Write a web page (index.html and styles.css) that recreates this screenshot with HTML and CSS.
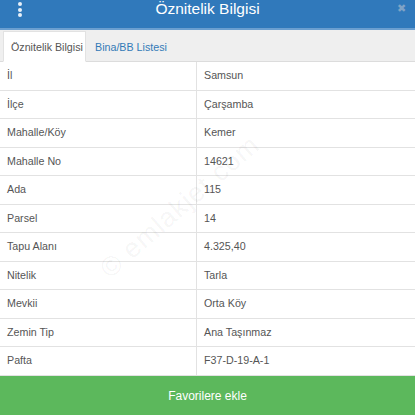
FILE: index.html
```html
<!DOCTYPE html>
<html lang="tr">
<head>
<meta charset="utf-8">
<title>Öznitelik Bilgisi</title>
<link rel="stylesheet" href="styles.css">
</head>
<body>
<div class="panel">
  <header class="topbar">
    <span class="menu-dots"><i></i><i></i><i></i></span>
    <h1 class="title">Öznitelik Bilgisi</h1>
    <span class="close">&#x2716;</span>
  </header>
  <nav class="tabs">
    <span class="tab active">Öznitelik Bilgisi</span>
    <span class="tab">Bina/BB Listesi</span>
  </nav>
  <div class="table">
    <div class="row"><div class="cell key">İl</div><div class="cell val">Samsun</div></div>
    <div class="row"><div class="cell key">İlçe</div><div class="cell val">Çarşamba</div></div>
    <div class="row"><div class="cell key">Mahalle/Köy</div><div class="cell val">Kemer</div></div>
    <div class="row"><div class="cell key">Mahalle No</div><div class="cell val">14621</div></div>
    <div class="row"><div class="cell key">Ada</div><div class="cell val">115</div></div>
    <div class="row"><div class="cell key">Parsel</div><div class="cell val">14</div></div>
    <div class="row"><div class="cell key">Tapu Alanı</div><div class="cell val">4.325,40</div></div>
    <div class="row"><div class="cell key">Nitelik</div><div class="cell val">Tarla</div></div>
    <div class="row"><div class="cell key">Mevkii</div><div class="cell val">Orta Köy</div></div>
    <div class="row"><div class="cell key">Zemin Tip</div><div class="cell val">Ana Taşınmaz</div></div>
    <div class="row"><div class="cell key">Pafta</div><div class="cell val">F37-D-19-A-1</div></div>
    <div class="watermark">© emlakjet.com</div>
  </div>
  <button class="fav">Favorilere ekle</button>
</div>
</body>
</html>
```
FILE: styles.css
```css
html, body {
  margin: 0;
  padding: 0;
  background: #fff;
}
body {
  font-family: "Liberation Sans", Arial, sans-serif;
  width: 415px;
  height: 415px;
  overflow: hidden;
}
.panel {
  display: flex;
  flex-direction: column;
  height: 415px;
}
.topbar {
  height: 28px;
  background: #3079bb;
  border-bottom: 2px solid #6b9fd0;
  display: flex;
  align-items: center;
  justify-content: center;
  position: relative;
  flex: none;
}
.title {
  margin: 0;
  font-size: 15.5px;
  font-weight: normal;
  color: #fff;
  line-height: 18px;
  margin-top: -11px;
}
.menu-dots {
  position: absolute;
  left: 18px;
  top: 2px;
  display: flex;
  flex-direction: column;
  gap: 1.5px;
}
.menu-dots i {
  display: block;
  width: 4px;
  height: 4px;
  border-radius: 50%;
  background: #e8f0f8;
}
.close {
  position: absolute;
  right: 9px;
  top: 2px;
  font-size: 11px;
  color: #7fa3c6;
  line-height: 12px;
}
.tabs {
  height: 31px;
  background: #efefef;
  border-bottom: 1px solid #dcdcdc;
  display: flex;
  align-items: flex-end;
  padding-left: 3px;
  flex: none;
}
.tab {
  height: 30px;
  line-height: 30px;
  font-size: 10.7px;
  color: #337ab7;
  padding: 0 8px 0 9px;
  box-sizing: border-box;
  margin-bottom: -1px;
  white-space: nowrap;
}
.tab.active {
  background: #fff;
  color: #555;
  width: 83px;
  padding: 0 0 0 7px;
  height: 31px;
  line-height: 30px;
  border: 1px solid #e2e2e2;
  border-bottom-color: #fff;
}
.table {
  flex: 1;
  position: relative;
  overflow: hidden;
}
.row {
  display: grid;
  grid-template-columns: 196px 1fr;
  height: 28.5px;
  box-sizing: border-box;
  border-bottom: 1px solid #e2e2e2;
}
.cell {
  font-size: 10.7px;
  color: #555;
  line-height: 27px;
  padding-left: 7px;
  white-space: nowrap;
}
.val {
  border-left: 1px solid #e2e2e2;
}
.watermark {
  position: absolute;
  left: 180px;
  top: 145px;
  font-size: 27px;
  letter-spacing: 1px;
  color: rgba(0, 0, 0, 0.05);
  transform: translate(-50%, -50%) rotate(-41deg);
  white-space: nowrap;
  pointer-events: none;
}
.fav {
  flex: none;
  height: 39px;
  border: none;
  margin: 0;
  background: #5cb85c;
  color: #fff;
  font-family: "Liberation Sans", Arial, sans-serif;
  font-size: 12px;
  padding: 0;
  width: 100%;
}
```
